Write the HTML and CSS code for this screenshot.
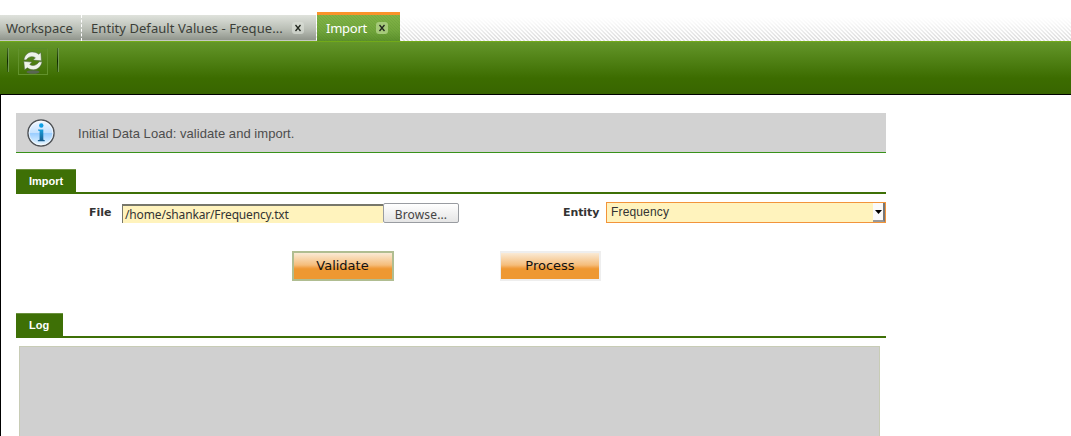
FILE: index.html
```html
<!DOCTYPE html>
<html lang="en">
<head>
<meta charset="utf-8">
<title>Import</title>
<link rel="stylesheet" href="styles.css">
</head>
<body>
<nav class="tabs">
  <div class="tab workspace"><span class="tab-label">Workspace</span></div>
  <div class="tab entity"><span class="tab-label">Entity Default Values - Freque...</span><span class="close"><svg width="12" height="12" viewBox="0 0 12 12"><path d="M3.5 3L8.5 9M8.5 3L3.5 9"/></svg></span></div>
  <div class="tab active"><span class="tab-label">Import</span><span class="close"><svg width="12" height="12" viewBox="0 0 12 12"><path d="M3.5 3L8.5 9M8.5 3L3.5 9"/></svg></span></div>
</nav>
<div class="toolbar">
  <span class="divider"></span>
  <span class="refresh">
    <svg width="22" height="24" viewBox="0 0 22 24">
      <ellipse cx="11" cy="21" rx="6.500" ry="1.700" fill="#596653"/>
      <path d="M1.800 8.800C3 3.500 6.300 1 10.300 1c2.600 0 4.700.8 6.300 2.300l2.300-1.800.5 8.300-8.300-.7 2.300-2.300C10.900 4.900 6.800 5.100 4.200 9z" fill="#eef3e9" stroke="#4b6140" stroke-width=".5"/>
      <path d="M20.100 10.800C18.900 16.100 15.400 18.800 11.300 18.800c-2.400 0-4.300-.7-5.900-2L2.600 18.700l-.8-8.400 8.300.8-2.400 2.300c2.700 2 6.600 1.300 9.500-2.600z" fill="#eef3e9" stroke="#4b6140" stroke-width=".5"/>
    </svg>
  </span>
  <span class="divider"></span>
</div>
<main class="content">
  <div class="message">
    <svg class="info" width="28" height="28" viewBox="0 0 28 28">
      <defs><linearGradient id="ball" x2="0" y2="1"><stop offset="0" stop-color="#f4f9ff"/><stop offset=".5" stop-color="#c3e1ff"/><stop offset=".52" stop-color="#9acdff"/><stop offset="1" stop-color="#eefaff"/></linearGradient>
      <linearGradient id="mark" x2="0" y2="1"><stop stop-color="#189fdc"/><stop offset="1" stop-color="#175a8b"/></linearGradient></defs>
      <circle cx="14" cy="14" r="13" fill="url(#ball)" stroke="#505357" stroke-width="1.500"/>
      <circle cx="14" cy="14" r="11.900" fill="none" stroke="#fff" stroke-width=".7"/>
      <circle cx="14.300" cy="6.500" r="2.200" fill="#0f9fe4"/>
      <path d="M11 10.500h5.300v10.300l1.500.4v1h-7v-1l1.800-.4v-8.800l-1.600-.5z" fill="url(#mark)"/>
    </svg>
    <span>Initial Data Load: validate and import.</span>
  </div>
  <h2 class="section import-title"><span>Import</span></h2>
  <div class="form-row">
    <span class="label file-label">File</span>
    <span class="file"><span>/home/shankar/Frequency.txt</span></span>
    <button class="browse"><span>Browse...</span></button>
    <span class="label entity-label">Entity</span>
    <span class="combo"><span>Frequency</span><span class="combo-arrow"><svg width="7" height="4" viewBox="0 0 7 4"><path d="M0 0h7L3.500 4z"/></svg></span></span>
  </div>
  <div class="actions"><button class="action focused">Validate</button><button class="action">Process</button></div>
  <h2 class="section log-title"><span>Log</span></h2>
  <div class="log"></div>
</main>
</body>
</html>
```

FILE: styles.css
```css
* { box-sizing: border-box; }
body { margin: 0; width: 1071px; height: 436px; overflow: hidden; background: #fff; font-family: "Liberation Sans", sans-serif; color: #333; }
button { margin: 0; padding: 0; border: 0; }
.tabs { height: 41px; display: flex; align-items: flex-end; background: linear-gradient(#fff 17px, #ffffffd0 24px, #ffffff30 41px), repeating-linear-gradient(45deg, #d5d5d5 0 1px, #fafafa 1px 2.828px); }
.tab { height: 26px; display: flex; align-items: center; background: linear-gradient(#dfe2dc, #b9beb5 55%, #91968d 96%, #c6c9c4 97%); font: 13px "Noto Sans", sans-serif; color: #3b3e38; }
.tab-label { white-space: nowrap; }
.workspace { width: 82px; padding-left: 6px; border-right: 1px dashed #fff; letter-spacing: -.04px; }
.entity { width: 234px; padding-left: 9px; margin-right: 1px; letter-spacing: .06px; }
.close { width: 12px; height: 12px; border-radius: 3px; background: #dce0d8a0; display: flex; }
.close path { stroke: #20251d; stroke-width: 1.300; fill: none; }
.entity .close { margin-left: 9px; }
.active { width: 83px; height: 29px; padding: 0 0 0 9px; border-top: 3px solid #fa932b; background: repeating-linear-gradient(45deg, transparent 0 1px, #49782422 1px 2.121px), linear-gradient(#82b448, #72a63c 60%, #5c902c); color: #fff; letter-spacing: -.25px; }
.active .close { margin-left: 9px; background: #a6ca7a; }
.toolbar { height: 54px; padding: 6px 0 0 7px; display: flex; align-items: flex-start; border-top: 1px solid #72aa18; border-bottom: 1px solid #000; background: linear-gradient(#64962a, #3c6c00 70%, #386500); }
.divider { width: 2px; height: 24px; border-right: 1px solid #6f9850; background: linear-gradient(#436b22, #102800 55%, #315b0c); }
.refresh { width: 30px; height: 27px; margin: 0 9px; padding: 2px 0 0 3px; border: 1px solid #62922c; border-top-color: #588c28; }
.refresh svg { display: block; }
.content { height: 341px; border-left: 1px solid #000; padding: 18px 0 0 15px; }
.message { width: 870px; height: 40px; display: flex; align-items: center; padding-left: 11px; background: #d2d2d2; border-bottom: 1px solid #38911a; font-size: 13px; letter-spacing: .045px; color: #4d4d4d; }
.message span { margin: 2px 0 0 23px; }
.section { width: 870px; height: 25px; margin: 0; border-bottom: 2px solid #3e7006; display: flex; font-size: 11px; color: #fff; }
.section span { height: 23px; line-height: 23px; padding: 0 0 0 13px; background: #3e7006; border-top: 1px solid #6b913e; }
.import-title { margin-top: 16px; }
.import-title span { width: 60px; }
.form-row { width: 870px; height: 21px; margin-top: 8px; display: flex; align-items: flex-start; }
.label { font: bold 11px/20px "DejaVu Sans", sans-serif; white-space: nowrap; margin-top: 1px; }
.file-label { width: 106px; padding-left: 73px; }
.file { width: 261px; height: 19px; margin-top: 2px; padding-left: 2px; border-top: 2px solid #77776a; border-left: 1px solid #77776a; background: #fff3bd; font: 12px/17px "Noto Sans", sans-serif; letter-spacing: -.15px; white-space: nowrap; }
.browse { width: 76px; height: 20px; margin: 1px 0 0 0; border: 1px solid #999ca1; border-radius: 2px; background: linear-gradient(#fff, #e5e5e5); font: 12px/18px "Noto Sans", sans-serif; letter-spacing: .15px; color: #444; }
.browse span { display: block; margin-top: 2px; }
.entity-label { width: 43px; margin-left: 104px; letter-spacing: -.1px; }
.combo { width: 280px; height: 21px; padding-left: 4px; display: flex; justify-content: space-between; border: 1px solid #f2943a; background: #fff3bd; font-size: 12px; line-height: 18px; letter-spacing: .15px; }
.combo-arrow { width: 12px; height: 19px; display: flex; align-items: center; justify-content: center; background: #fafafa; border-right: 2px solid #777; border-bottom: 2px solid #999; }
.actions { display: flex; gap: 106px; margin: 28px 0 0 276px; }
.action { width: 101px; height: 30px; border: 2px solid #eee; border-left-width: 1px; background: linear-gradient(#faead5, #f5bd7b 12px, #f19e40 15px, #ee9832 16px); font: 13px/24px "DejaVu Sans", sans-serif; color: #111; }
.focused { width: 102px; border: 2px solid #b0bd91; padding-right: 1px; }
.log-title { margin-top: 32px; }
.log-title span { width: 47px; }
.log { width: 861px; height: 90px; margin: 8px 0 0 3px; border: 1px solid #c8ccb6; border-bottom: 0; background: #d0d0d0; }
```
